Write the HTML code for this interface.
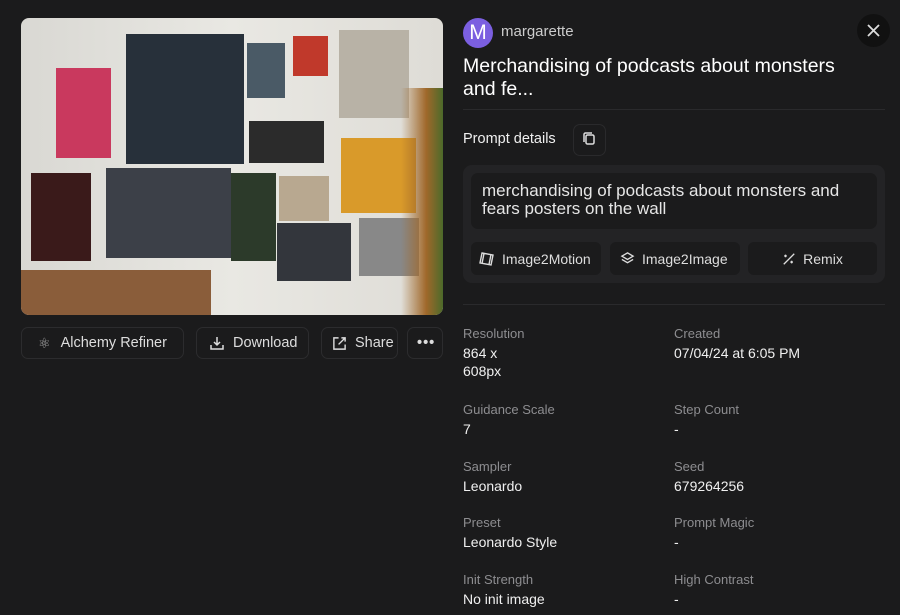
<!DOCTYPE html>
<html><head><style>
*{box-sizing:border-box;margin:0;padding:0}
body{width:900px;height:615px;background:#1b1b1c;font-family:"Liberation Sans",sans-serif;color:#eee;position:relative;overflow:hidden}
.a{position:absolute}
.img{left:21px;top:18px;width:422px;height:297px;border-radius:8px;overflow:hidden;background:linear-gradient(90deg,#d9d8d3,#e9e8e3 50%,#dedcd6)}
.p{position:absolute}
.btn{position:absolute;top:327px;height:32px;border:1px solid #2c2c2e;border-radius:7px;font-size:14.5px;color:#ddd;display:flex;align-items:center;gap:8px;padding-left:14px}
.lbl{font-size:13px;color:#8d8d90}
.val{font-size:14px;color:#f0f0f0;margin-top:3px;line-height:18px}
.tb{position:absolute;top:242px;height:33px;background:#1b1b1c;border-radius:6px;font-size:14px;color:#ddd;display:flex;align-items:center;gap:7px}
</style></head><body>
<div class="a img">
 <div class="p" style="left:105px;top:16px;width:118px;height:130px;background:#27303a"></div>
 <div class="p" style="left:35px;top:50px;width:55px;height:90px;background:#c9395e"></div>
 <div class="p" style="left:226px;top:25px;width:38px;height:55px;background:#4a5a66"></div>
 <div class="p" style="left:272px;top:18px;width:35px;height:40px;background:#c0392b"></div>
 <div class="p" style="left:318px;top:12px;width:70px;height:88px;background:#b8b2a6"></div>
 <div class="p" style="left:228px;top:103px;width:75px;height:42px;background:#2b2b2b"></div>
 <div class="p" style="left:320px;top:120px;width:75px;height:75px;background:#d99a2a"></div>
 <div class="p" style="left:10px;top:155px;width:60px;height:88px;background:#3a1a1a"></div>
 <div class="p" style="left:85px;top:150px;width:125px;height:90px;background:#3c4048"></div>
 <div class="p" style="left:210px;top:155px;width:45px;height:88px;background:#2c3a2a"></div>
 <div class="p" style="left:258px;top:158px;width:50px;height:45px;background:#b8a890"></div>
 <div class="p" style="left:256px;top:205px;width:74px;height:58px;background:#33363c"></div>
 <div class="p" style="left:338px;top:200px;width:60px;height:58px;background:#888"></div>
 <div class="p" style="left:0;top:252px;width:190px;height:45px;background:#8a5d3a"></div>
 <div class="p" style="left:380px;top:70px;width:42px;height:227px;background:linear-gradient(90deg,transparent,#a0682a 60%,#4c6a2a)"></div>
</div>
<div class="btn" style="left:21px;width:163px;gap:10px;padding-left:16px"><span style="font-size:14px;color:#aaa">⚛</span>Alchemy Refiner</div>
<div class="btn" style="left:196px;width:113px;padding-left:12px"><svg width="16" height="16" viewBox="0 0 16 16" fill="none" stroke="#ddd" stroke-width="1.5"><path d="M8 2v8M5 7l3 3 3-3M2 10v4h12v-4"/></svg>Download</div>
<div class="btn" style="left:321px;width:77px;padding-left:10px"><svg width="15" height="15" viewBox="0 0 16 16" fill="none" stroke="#ddd" stroke-width="1.5"><path d="M7 2H2v12h12V9M10 2h4v4M14 2L7 9"/></svg>Share</div>
<div class="btn" style="left:407px;width:36px;padding-left:9px;font-weight:bold;letter-spacing:1px">•••</div>

<div class="a" style="left:463px;top:18px;width:30px;height:30px;border-radius:50%;background:#7b5fe0;color:#fff;font-size:21px;text-align:center;line-height:30px">M</div>
<div class="a" style="left:501px;top:23px;font-size:15px;color:#ccc">margarette</div>
<div class="a" style="left:857px;top:14px;width:33px;height:33px;border-radius:50%;background:#111"><svg width="33" height="33" viewBox="0 0 33 33" stroke="#ddd" stroke-width="1.8"><path d="M11 11l11 11M22 11L11 22"/></svg></div>
<div class="a" style="left:463px;top:55px;width:405px;font-size:19.5px;line-height:23px;color:#fff;font-weight:500">Merchandising of podcasts about monsters and fe...</div>
<div class="a" style="left:463px;top:109px;width:422px;height:1px;background:#2a2a2c"></div>
<div class="a" style="left:463px;top:131px;font-size:14.5px;color:#f0f0f0">Prompt details</div>
<div class="a" style="left:573px;top:124px;width:33px;height:32px;border:1px solid #2a2a2c;border-radius:7px"><svg width="31" height="30" viewBox="0 0 31 30" fill="none" stroke="#ddd" stroke-width="1.5"><rect x="12" y="10" width="8" height="9" rx="1.5"/><path d="M10 17V9.5A1.5 1.5 0 0 1 11.5 8H18"/></svg></div>
<div class="a" style="left:463px;top:165px;width:422px;height:118px;background:#232325;border-radius:9px"></div>
<div class="a" style="left:471px;top:173px;width:406px;height:56px;background:#1b1b1c;border-radius:7px;padding:9px 11px;font-size:17px;line-height:18px;color:#e6e6e6">merchandising of podcasts about monsters and fears posters on the wall</div>
<div class="tb" style="left:471px;width:130px;padding-left:8px"><svg width="16" height="16" viewBox="0 0 16 16" fill="none" stroke="#ddd" stroke-width="1.4"><path d="M3 2l11 2-2 10-11-2z M5 2.5l-2 10M12 3.5l-2 10"/></svg>Image2Motion</div>
<div class="tb" style="left:610px;width:130px;padding-left:10px"><svg width="15" height="15" viewBox="0 0 16 16" fill="none" stroke="#ddd" stroke-width="1.4"><path d="M8 2l6 3.5-6 3.5-6-3.5z M2 9l6 3.5L14 9"/></svg>Image2Image</div>
<div class="tb" style="left:748px;width:129px;justify-content:center"><svg width="14" height="14" viewBox="0 0 16 16" fill="none" stroke="#ddd" stroke-width="1.5"><path d="M2 14L14 2M4 3v3M2.5 4.5h3M11 10v3M9.5 11.5h3"/></svg>Remix</div>
<div class="a" style="left:463px;top:304px;width:422px;height:1px;background:#2a2a2c"></div>

<div class="a" style="left:463px;top:326px"><div class="lbl">Resolution</div><div class="val">864 x<br>608px</div></div>
<div class="a" style="left:674px;top:326px"><div class="lbl">Created</div><div class="val">07/04/24 at 6:05 PM</div></div>
<div class="a" style="left:463px;top:402px"><div class="lbl">Guidance Scale</div><div class="val">7</div></div>
<div class="a" style="left:674px;top:402px"><div class="lbl">Step Count</div><div class="val">-</div></div>
<div class="a" style="left:463px;top:459px"><div class="lbl">Sampler</div><div class="val">Leonardo</div></div>
<div class="a" style="left:674px;top:459px"><div class="lbl">Seed</div><div class="val">679264256</div></div>
<div class="a" style="left:463px;top:515px"><div class="lbl">Preset</div><div class="val">Leonardo Style</div></div>
<div class="a" style="left:674px;top:515px"><div class="lbl">Prompt Magic</div><div class="val">-</div></div>
<div class="a" style="left:463px;top:572px"><div class="lbl">Init Strength</div><div class="val">No init image</div></div>
<div class="a" style="left:674px;top:572px"><div class="lbl">High Contrast</div><div class="val">-</div></div>
</body></html>
